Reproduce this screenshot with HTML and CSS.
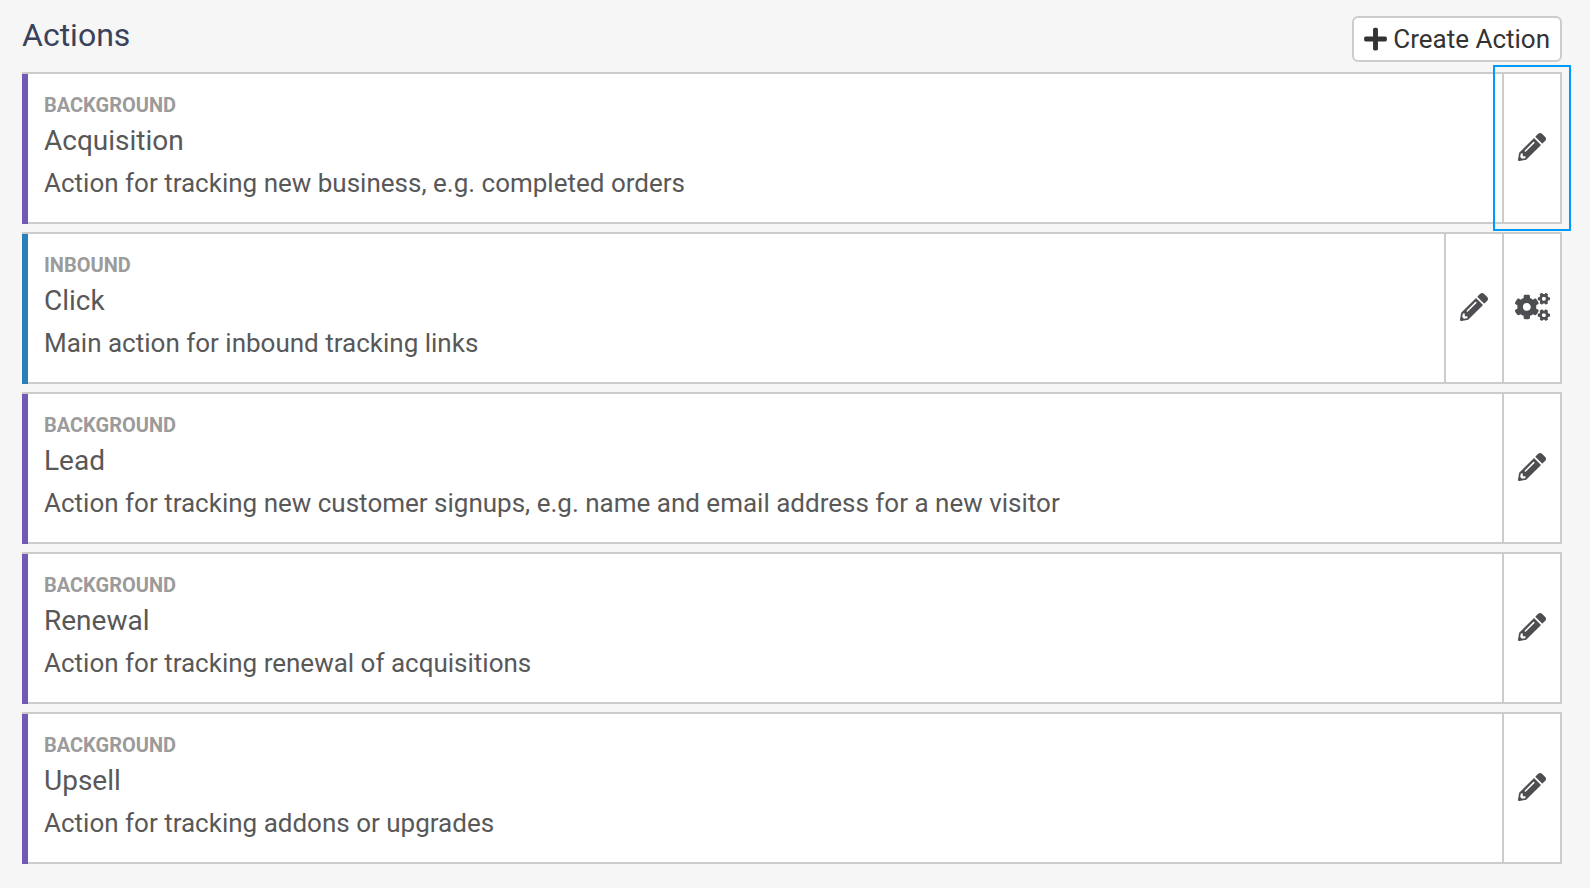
FILE: index.html
```html
<!DOCTYPE html>
<html lang="en">
<head>
    <meta charset="utf-8">
    <title>Actions</title>
    <link rel="stylesheet" href="styles.css">
</head>
<body>
    <svg class="sprite" aria-hidden="true">
        <symbol id="plus" viewBox="0 0 448 512">
            <path d="M416 208H272V64c0-17.67-14.33-32-32-32h-32c-17.67 0-32 14.33-32 32v144H32c-17.67 0-32 14.33-32 32v32c0 17.67 14.33 32 32 32h144v144c0 17.67 14.33 32 32 32h32c17.67 0 32-14.33 32-32V304h144c17.67 0 32-14.33 32-32v-32c0-17.67-14.33-32-32-32z"/>
        </symbol>
        <symbol id="pencil" viewBox="0 0 512 512">
            <path d="M497.9 142.1l-46.1 46.1c-4.7 4.7-12.3 4.7-17 0l-111-111c-4.7-4.7-4.7-12.3 0-17l46.1-46.1c18.7-18.7 49.1-18.7 67.9 0l60.1 60.1c18.8 18.7 18.8 49.1 0 67.9zM284.2 99.8L21.6 362.4.4 483.9c-2.9 16.4 11.4 30.6 27.8 27.8l121.5-21.3 262.6-262.6c4.7-4.7 4.7-12.3 0-17l-111-111c-4.8-4.7-12.4-4.7-17.1 0zM124.1 339.9c-5.5-5.5-5.5-14.3 0-19.8l154-154c5.5-5.5 14.3-5.5 19.8 0s5.5 14.3 0 19.8l-154 154c-5.5 5.5-14.3 5.5-19.8 0zM88 424h48v36.3l-64.5 11.3-31.1-31.1L51.7 376H88v48z"/>
        </symbol>
        <symbol id="cogs" viewBox="0 0 640 512">
            <path id="small-cog" d="M512.1 191l-8.2 14.3c-3 5.3-9.4 7.5-15.1 5.4-11.8-4.4-22.6-10.7-32.1-18.6-4.6-3.8-5.8-10.5-2.8-15.7l8.2-14.3c-6.9-8-12.3-17.3-15.9-27.4h-16.5c-6 0-11.2-4.3-12.2-10.3-2-12-2.1-24.6 0-37.1 1-6 6.2-10.4 12.2-10.4h16.5c3.6-10.1 9-19.4 15.9-27.4l-8.2-14.3c-3-5.2-1.9-11.9 2.8-15.7 9.5-7.9 20.4-14.2 32.1-18.6 5.7-2.1 12.1.1 15.1 5.4l8.2 14.3c10.5-1.9 21.2-1.9 31.7 0L552 6.3c3-5.3 9.4-7.5 15.1-5.4 11.8 4.4 22.6 10.7 32.1 18.6 4.6 3.8 5.8 10.5 2.8 15.7l-8.2 14.3c6.9 8 12.3 17.3 15.9 27.4h16.5c6 0 11.2 4.3 12.2 10.3 2 12 2.1 24.6 0 37.1-1 6-6.2 10.4-12.2 10.4h-16.5c-3.6 10.1-9 19.4-15.9 27.4l8.2 14.3c3 5.2 1.9 11.9-2.8 15.7-9.5 7.9-20.4 14.2-32.1 18.6-5.7 2.1-12.1-.1-15.1-5.4l-8.2-14.3c-10.4 1.9-21.2 1.9-31.7 0zm-10.5-58.8c38.5 29.6 82.4-14.3 52.8-52.8-38.5-29.7-82.4 14.3-52.8 52.8z"/>
            <use href="#small-cog" y="299"/>
            <path d="M386.3 286.1l33.7 16.8c10.1 5.8 14.5 18.1 10.5 29.1-8.9 24.2-26.4 46.4-42.6 65.8-7.4 8.9-20.2 11.1-30.3 5.3l-29.1-16.8c-16 13.7-34.6 24.6-54.9 31.7v33.6c0 11.6-8.3 21.6-19.7 23.6-24.6 4.2-50.4 4.4-75.9 0-11.5-2-20-11.9-20-23.6V418c-20.3-7.2-38.9-18-54.9-31.7L74 403c-10 5.8-22.9 3.6-30.3-5.3-16.2-19.4-33.3-41.6-42.2-65.7-4-10.9.4-23.2 10.5-29.1l33.3-16.8c-3.9-20.9-3.9-42.4 0-63.4L12 205.8c-10.1-5.8-14.6-18.1-10.5-29 8.9-24.2 26-46.4 42.2-65.8 7.4-8.9 20.2-11.1 30.3-5.3l29.1 16.8c16-13.7 34.6-24.6 54.9-31.7V57.1c0-11.5 8.2-21.5 19.6-23.5 24.6-4.2 50.5-4.4 76-.1 11.5 2 20 11.9 20 23.6v33.6c20.3 7.2 38.9 18 54.9 31.7l29.1-16.8c10-5.8 22.9-3.6 30.3 5.3 16.2 19.4 33.2 41.6 42.1 65.8 4 10.9.1 23.2-10 29.1l-33.7 16.8c3.9 21 3.9 42.5 0 63.5zm-117.6 21.1c59.2-77-28.7-164.9-105.7-105.7-59.2 77 28.7 164.9 105.7 105.7z"/>
        </symbol>
    </svg>

    <header class="header">
        <h1>Actions</h1>
        <button type="button" class="create">
            <svg class="plus"><use href="#plus"/></svg>
            <span>Create Action</span>
        </button>
    </header>

    <ul class="actions">
        <li class="action background">
            <div class="info">
                <div class="type">Background</div>
                <h2>Acquisition</h2>
                <p>Action for tracking new business, e.g. completed orders</p>
            </div>
            <button type="button" class="tool highlight" aria-label="Edit Acquisition"><svg class="pencil"><use href="#pencil"/></svg></button>
        </li>
        <li class="action inbound">
            <div class="info">
                <div class="type">Inbound</div>
                <h2>Click</h2>
                <p>Main action for inbound tracking links</p>
            </div>
            <button type="button" class="tool" aria-label="Edit Click"><svg class="pencil"><use href="#pencil"/></svg></button>
            <button type="button" class="tool" aria-label="Click settings"><svg class="cogs"><use href="#cogs"/></svg></button>
        </li>
        <li class="action background">
            <div class="info">
                <div class="type">Background</div>
                <h2>Lead</h2>
                <p>Action for tracking new customer signups, e.g. name and email address for a new visitor</p>
            </div>
            <button type="button" class="tool" aria-label="Edit Lead"><svg class="pencil"><use href="#pencil"/></svg></button>
        </li>
        <li class="action background">
            <div class="info">
                <div class="type">Background</div>
                <h2>Renewal</h2>
                <p>Action for tracking renewal of acquisitions</p>
            </div>
            <button type="button" class="tool" aria-label="Edit Renewal"><svg class="pencil"><use href="#pencil"/></svg></button>
        </li>
        <li class="action background">
            <div class="info">
                <div class="type">Background</div>
                <h2>Upsell</h2>
                <p>Action for tracking addons or upgrades</p>
            </div>
            <button type="button" class="tool" aria-label="Edit Upsell"><svg class="pencil"><use href="#pencil"/></svg></button>
        </li>
    </ul>
</body>
</html>
```
FILE: styles.css
```css
* {
    box-sizing: border-box;
}

body {
    margin: 0;
    padding: 16px 28px 24px 22px;
    background-color: #f6f6f6;
    color: #585858;
    font-family: Roboto, Arial, sans-serif;
}

h1, h2, p, ul {
    margin: 0;
    padding: 0;
    font-weight: 400;
}

button {
    padding: 0;
    border: none;
    font-family: inherit;
    cursor: pointer;
}

svg {
    display: block;
    fill: currentColor;
}

.sprite {
    display: none;
}

.header {
    display: flex;
    justify-content: space-between;
    align-items: flex-start;
    margin-bottom: 10px;
}

.header h1 {
    color: #39425a;
    font-size: 32px;
    line-height: 38px;
}

.create {
    display: flex;
    align-items: center;
    gap: 6px;
    padding: 3px 10px;
    border: 2px solid #ccc;
    border-radius: 6px;
    background-color: #fff;
    color: #333;
    font-size: 26px;
    line-height: 36px;
}

.plus {
    width: 23px;
    height: 26px;
}

.actions {
    display: flex;
    flex-direction: column;
    gap: 8px;
    list-style: none;
}

.action {
    display: flex;
    border: 2px solid #ccc;
    border-left: none;
    background-color: #fff;
}

/* coloured bar, runs over the bottom border */
.action::before {
    content: "";
    flex: none;
    width: 6px;
    margin-bottom: -2px;
    background-color: #6f5bb5;
}

.inbound::before {
    background-color: #2980b9;
}

.info {
    flex: 1;
    padding: 19px 16px 21px;
}

.type {
    margin-bottom: 6px;
    color: #9b9b9b;
    font-size: 20px;
    font-weight: 700;
    line-height: 24px;
    text-transform: uppercase;
}

.info h2 {
    margin-bottom: 6px;
    font-size: 28px;
    line-height: 36px;
}

.info p {
    font-size: 26px;
    line-height: 36px;
}

.tool {
    display: flex;
    flex: none;
    align-items: center;
    justify-content: center;
    width: 58px;
    padding-bottom: 2px;
    border-left: 2px solid #ccc;
    background-color: transparent;
    color: #4d4e52;
}

.pencil {
    width: 28px;
    height: 28px;
}

.cogs {
    width: 35px;
    height: 28px;
}

.highlight {
    position: relative;
}

.highlight::after {
    content: "";
    position: absolute;
    z-index: 1;
    top: -9px;
    right: -11px;
    bottom: -9px;
    left: -11px;
    border: 2px solid #0099ff;
}
```
